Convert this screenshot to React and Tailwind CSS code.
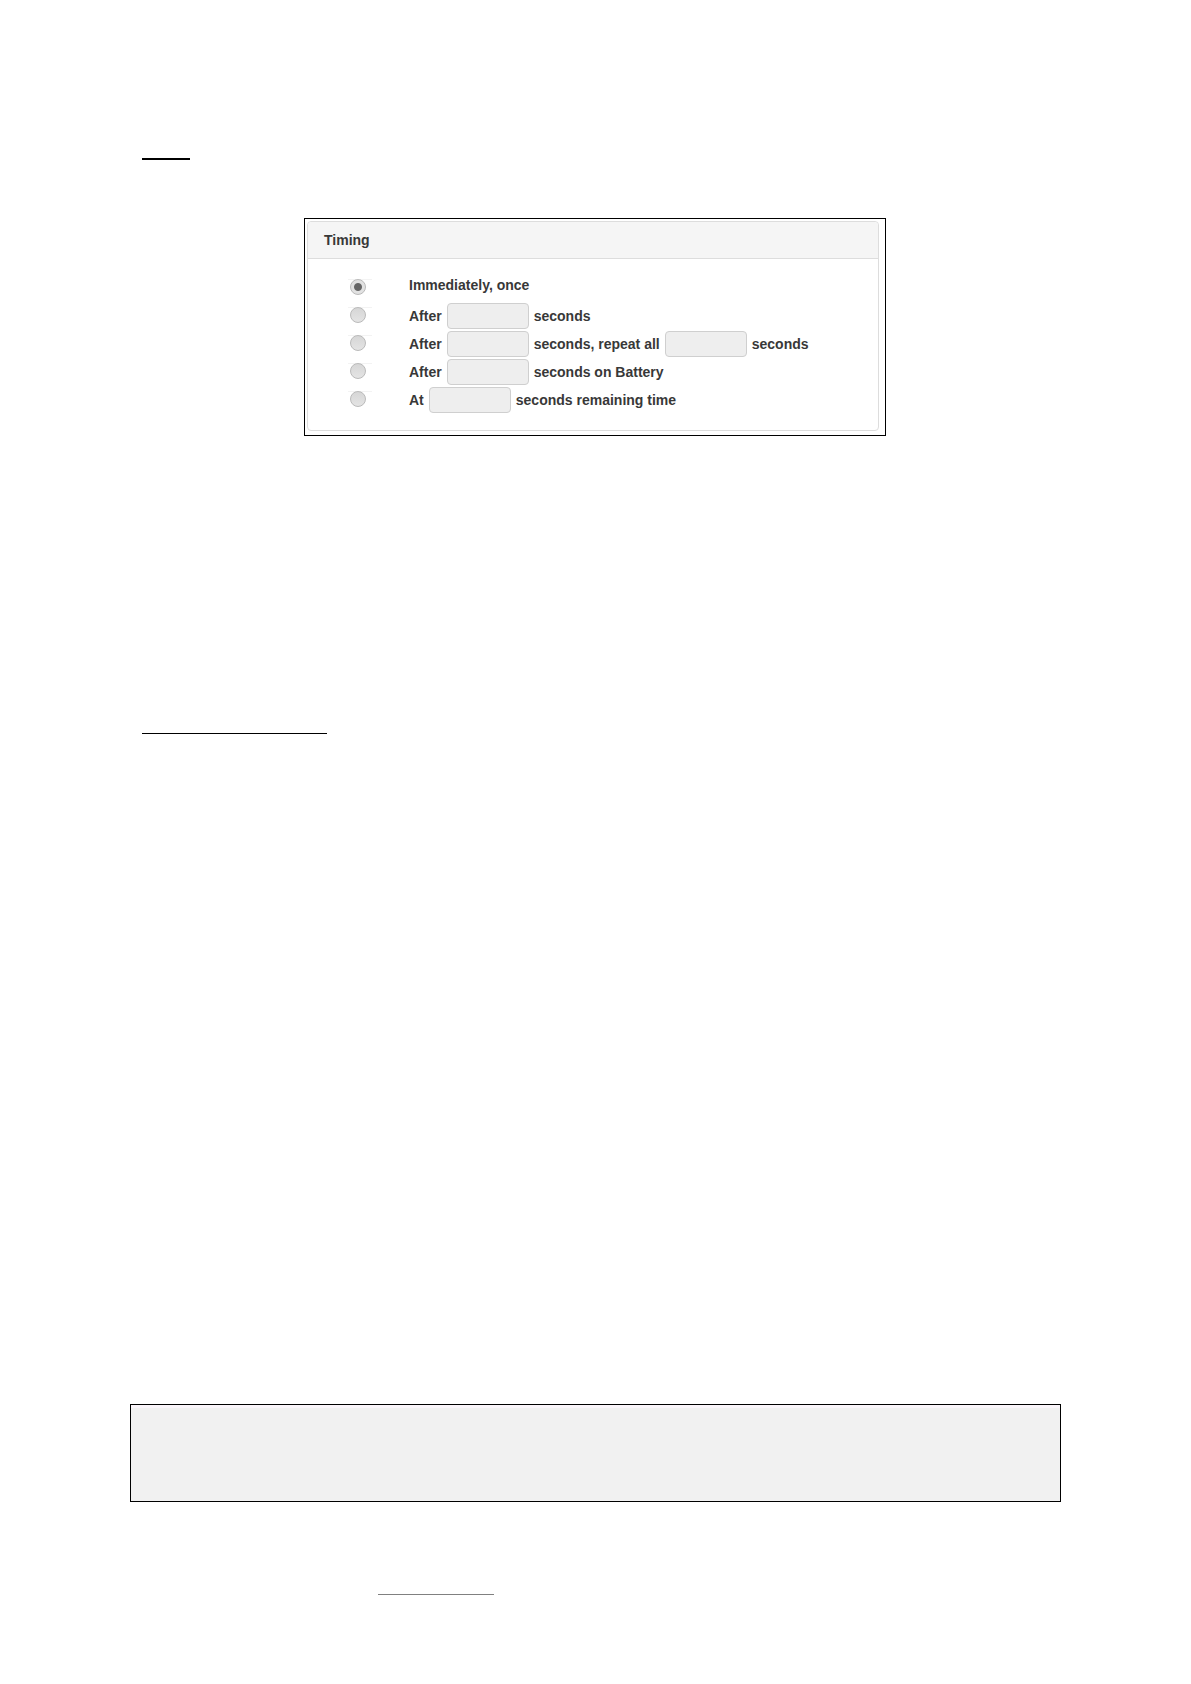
import React, { useState } from "react";

const options = [
  { id: "once", parts: ["Immediately, once"] },
  { id: "after", parts: ["After", null, "seconds"] },
  { id: "repeat", parts: ["After", null, "seconds, repeat all", null, "seconds"] },
  { id: "battery", parts: ["After", null, "seconds on Battery"] },
  { id: "remaining", parts: ["At", null, "seconds remaining time"] },
];

function TimingRow({ option, checked, onSelect }) {
  const single = option.parts.length === 1;

  return (
    <div className="flex h-7 items-start">
      <div className="mt-1 w-6 shrink-0 border-t border-[#f3f3f3] pl-0.5">
        <input
          type="radio"
          name="timing"
          id={option.id}
          checked={checked}
          onChange={() => onSelect(option.id)}
          className="-mt-px block size-4 appearance-none rounded-full border border-[#bababa] bg-linear-to-b from-[#d6d6d6] to-[#e4e4e4] checked:bg-radial checked:from-[#666666] checked:from-35% checked:to-[#e2e2e2] checked:to-45%"
        />
      </div>
      <label
        htmlFor={option.id}
        className={`ml-[37px] flex items-center gap-[5px] whitespace-nowrap ${single ? "h-5" : "h-[26px]"}`}
      >
        {option.parts.map((part, i) =>
          part === null ? (
            <input
              key={i}
              type="text"
              disabled
              aria-label="Seconds"
              className="h-[26px] w-[82px] rounded border border-[#cfcfcf] bg-[#eeeeee] px-2"
            />
          ) : (
            <span key={i}>{part}</span>
          )
        )}
      </label>
    </div>
  );
}

export default function App() {
  const [selected, setSelected] = useState("once");

  return (
    <main className="min-h-screen bg-white pt-[158px] pb-[89px] font-['Liberation_Sans',Arial,sans-serif]">
      <div className="ml-[142px] h-0.5 w-12 bg-black" />

      <div className="mt-[58px] pr-px">
        <div className="mx-auto max-w-[582px] border border-black bg-white pt-0.5 pr-1.5 pb-1 pl-0.5">
          <section className="rounded border border-[#dddddd] text-sm font-bold text-[#383838]">
            <h2 className="flex h-[37px] items-center rounded-t border-b border-[#dddddd] bg-[#f5f5f5] px-4">
              Timing
            </h2>
            <div className="pt-4 pb-[15px] pl-10">
              {options.map((option) => (
                <TimingRow
                  key={option.id}
                  option={option}
                  checked={selected === option.id}
                  onSelect={setSelected}
                />
              ))}
            </div>
          </section>
        </div>
      </div>

      <div className="mt-[297px] ml-[142px] h-px w-[185px] bg-black" />

      <div className="mx-[130px] mt-[670px] h-[98px] border border-black bg-[#f1f1f1]">
        <div className="h-[3px] bg-[#faf5fa]" />
      </div>

      <div className="mt-[92px] ml-[378px] h-px w-[116px] bg-[#808080]" />
    </main>
  );
}
